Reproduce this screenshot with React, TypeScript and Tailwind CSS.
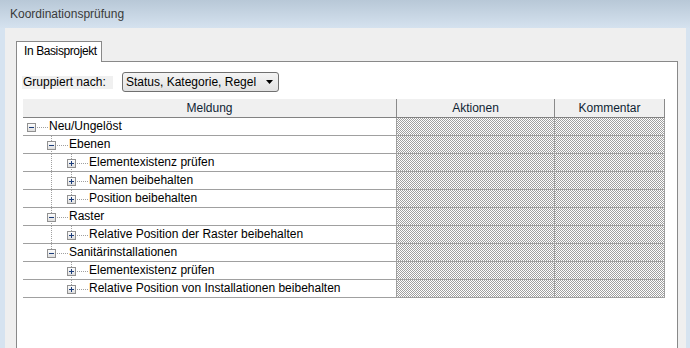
import React from "react";

type Row = { level: number; text: string; expanded: boolean; anc: number[]; hasNext: boolean };

const rows: Row[] = [
  { level: 0, text: "Neu/Ungelöst", expanded: true, anc: [], hasNext: false },
  { level: 1, text: "Ebenen", expanded: true, anc: [], hasNext: true },
  { level: 2, text: "Elementexistenz prüfen", expanded: false, anc: [1], hasNext: true },
  { level: 2, text: "Namen beibehalten", expanded: false, anc: [1], hasNext: true },
  { level: 2, text: "Position beibehalten", expanded: false, anc: [1], hasNext: false },
  { level: 1, text: "Raster", expanded: true, anc: [], hasNext: true },
  { level: 2, text: "Relative Position der Raster beibehalten", expanded: false, anc: [1], hasNext: false },
  { level: 1, text: "Sanitärinstallationen", expanded: true, anc: [], hasNext: false },
  { level: 2, text: "Elementexistenz prüfen", expanded: false, anc: [], hasNext: true },
  { level: 2, text: "Relative Position von Installationen beibehalten", expanded: false, anc: [], hasNext: false },
];

function Gutter({ row }: { row: Row }) {
  const L = row.level;
  const w = 26 + 20 * L;
  const cx = 8 + 20 * L + 0.5;
  const bx = 4 + 20 * L;
  const dot = { stroke: "#a0a0a0", strokeWidth: 1, strokeDasharray: "1 1" };
  return (
    <svg width={w} height={17} className="shrink-0 block">
      <defs>
        <linearGradient id="boxg" x1="0" y1="0" x2="0" y2="1">
          <stop offset="0" stopColor="#ffffff" />
          <stop offset="1" stopColor="#dcdcdc" />
        </linearGradient>
      </defs>
      {row.anc.map((a) => (
        <line key={a} x1={8 + 20 * a + 0.5} y1={0} x2={8 + 20 * a + 0.5} y2={17} {...dot} />
      ))}
      {L > 0 && <line x1={cx} y1={0} x2={cx} y2={6} {...dot} />}
      {row.hasNext && <line x1={cx} y1={13} x2={cx} y2={17} {...dot} />}
      <line x1={bx + 10} y1={9.5} x2={bx + 21} y2={9.5} {...dot} />
      <rect x={bx + 0.5} y={5.5} width={8} height={8} fill="url(#boxg)" stroke="#919191" />
      <line x1={bx + 2} y1={9.5} x2={bx + 7} y2={9.5} stroke="#1c3d7a" />
      {!row.expanded && <line x1={cx} y1={7} x2={cx} y2={12} stroke="#1c3d7a" />}
    </svg>
  );
}

const checker =
  "bg-[image:conic-gradient(#a0a0a0_25%,#ffffff_0_50%,#a0a0a0_0_75%,#ffffff_0)] bg-[length:2px_2px]";

export default function App() {
  return (
    <div className="w-[690px] h-[348px] overflow-hidden bg-[#d6e3f0] flex flex-col font-['Liberation_Sans',Arial,sans-serif] text-[12px] text-black">
      <div className="h-[28px] shrink-0 bg-gradient-to-b from-[#b8c8d7] to-[#d5e2ef] flex items-center pl-[10px] text-[#3a3a3a]">
        Koordinationsprüfung
      </div>
      <div className="flex-1 pl-[5px] pr-[4px] min-h-0">
        <div className="h-full bg-[#efefef] pl-[11px] pr-[8px] pt-[13px] flex flex-col">
          <div className="flex">
            <div className="relative z-10 -mb-px h-[21px] w-[86px] bg-white border-t border-l border-r border-[#898989] pl-[7px] leading-[19px] whitespace-nowrap tracking-[-0.4px]">
              In Basisprojekt
            </div>
          </div>
          <div className="h-[300px] shrink-0 bg-white border border-[#898989]">
            <div className="flex items-center mt-[10px] pl-[5px] h-[20px]">
              <div className="w-[91px] h-[13px] bg-[#f0f0f0] leading-[13px] pl-px whitespace-nowrap">Gruppiert nach:</div>
              <div className="ml-[9px] w-[157px] h-[20px] rounded-[3px] border border-[#707070] bg-gradient-to-b from-[#f4f4f4] to-[#e2e2e2] flex items-center justify-between pl-[3px] pr-[3px]">
                <span className="whitespace-nowrap">Status, Kategorie, Regel</span>
                <svg width="7" height="4" className="mr-[2px]">
                  <polygon points="0,0 7,0 3.5,4" fill="#000" />
                </svg>
              </div>
            </div>
            <div className="ml-[6px] mt-[7px] w-[642px]">
              <div className="grid grid-cols-[374px_158px_110px] h-[19px] bg-[#f0f0f0] border-b border-[#828282] leading-[18px] text-[#0f1f33]">
                <div className="text-center border-r border-[#8a8a8a]">Meldung</div>
                <div className="text-center border-r border-[#8a8a8a]">Aktionen</div>
                <div className="text-center border-r border-[#8a8a8a]">Kommentar</div>
              </div>
              {rows.map((r, i) => (
                <div key={i} className="grid grid-cols-[374px_158px_110px] h-[18px]">
                  <div className="flex items-start border-b border-r border-[#a0a0a0] leading-[17px] whitespace-nowrap">
                    <Gutter row={r} />
                    <span>{r.text}</span>
                  </div>
                  <div className={`${checker} border-b border-r border-dotted border-[#a0a0a0]`} />
                  <div className={`${checker} border-b border-r border-[#a0a0a0]`} />
                </div>
              ))}
            </div>
          </div>
        </div>
      </div>
    </div>
  );
}
